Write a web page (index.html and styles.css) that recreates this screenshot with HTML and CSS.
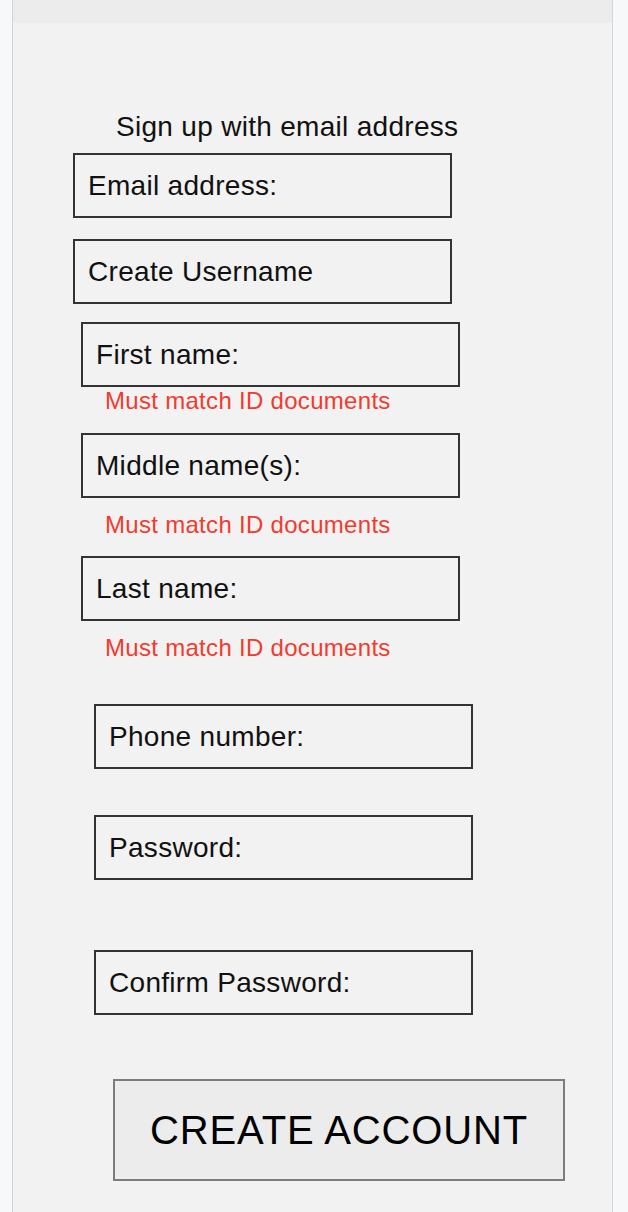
FILE: index.html
```html
<!DOCTYPE html>
<html>
<head>
<meta charset="utf-8">
<link rel="stylesheet" href="styles.css">
</head>
<body>
<div class="panel">
  <div class="topbar"></div>
  <div class="heading">Sign up with email address</div>
  <div class="field g1 email">Email address:</div>
  <div class="field g1 user">Create Username</div>
  <div class="field g2 first">First name:</div>
  <div class="hint h1">Must match ID documents</div>
  <div class="field g2 middle">Middle name(s):</div>
  <div class="hint h2">Must match ID documents</div>
  <div class="field g2 last">Last name:</div>
  <div class="hint h3">Must match ID documents</div>
  <div class="field g3 phone">Phone number:</div>
  <div class="field g3 pass">Password:</div>
  <div class="field g3 confirm">Confirm Password:</div>
  <div class="button">CREATE ACCOUNT</div>
</div>
</body>
</html>
```
FILE: styles.css
```css
html, body {
  margin: 0;
  padding: 0;
  background: #f7f8fa;
  font-family: "Liberation Sans", Arial, sans-serif;
  color: #111;
}
.panel {
  margin-left: 12px;
  width: 599px;
  min-height: 1212px;
  background: #f2f2f2;
  border-left: 1px solid #d4d4d4;
  border-right: 1px solid #d4d4d4;
  overflow: hidden;
}
.topbar {
  height: 23px;
  background: #ececec;
}
.heading {
  margin-top: 88px;
  margin-left: 103px;
  font-size: 28px;
  line-height: 32px;
  letter-spacing: 0.3px;
}
.field {
  box-sizing: border-box;
  height: 65px;
  width: 379px;
  border: 2px solid #333;
  display: flex;
  align-items: center;
  padding-left: 13px;
  font-size: 28px;
  line-height: 32px;
  letter-spacing: 0.3px;
}
.g1 { margin-left: 60px; }
.g2 { margin-left: 68px; }
.g3 { margin-left: 81px; }
.email { margin-top: 10px; }
.user { margin-top: 21px; }
.first { margin-top: 18px; }
.middle { margin-top: 18px; }
.last { margin-top: 17px; }
.phone { margin-top: 42px; }
.pass { margin-top: 46px; }
.confirm { margin-top: 70px; }
.hint {
  margin-left: 92px;
  font-size: 24px;
  line-height: 28px;
  letter-spacing: 0.3px;
  color: #f23b2f;
}
.h1 { margin-top: 0; }
.h2 { margin-top: 13px; }
.h3 { margin-top: 13px; }
.button {
  box-sizing: border-box;
  margin-top: 64px;
  margin-left: 100px;
  width: 452px;
  height: 102px;
  border: 2px solid #7c7c7c;
  background: #ececec;
  display: flex;
  align-items: center;
  justify-content: center;
  font-size: 40px;
  letter-spacing: 0.85px;
  color: #000;
}
```
